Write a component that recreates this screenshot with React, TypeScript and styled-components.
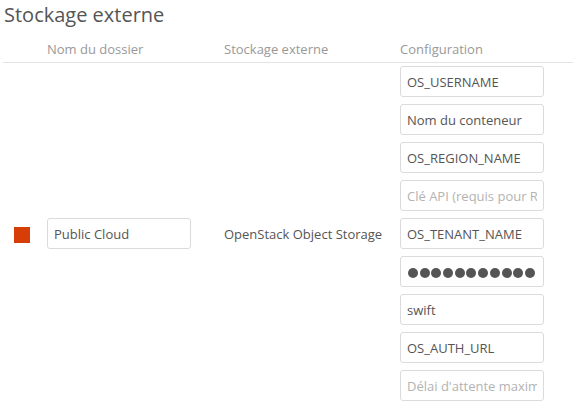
import React from "react";
import styled, { createGlobalStyle } from "styled-components";

const GlobalStyle = createGlobalStyle`
  html, body {
    margin: 0;
    padding: 0;
    background: #fff;
    overflow: hidden;
  }
  body {
    font-family: "Open Sans", "Liberation Sans", sans-serif;
    font-size: 13px;
    color: #555;
  }
`;

const Section = styled.div`
  padding-left: 3px;
`;

const Title = styled.h2`
  margin: 0;
  padding-left: 1px;
  font-size: 20px;
  font-weight: 400;
  line-height: 30px;
  color: #555;
`;

const Grid = styled.div`
  display: grid;
  grid-template-columns: 44px 177px 176px 1fr;
`;

const HeadCell = styled.div`
  padding: 11px 0 4px;
  line-height: 17px;
  color: #999;
  border-bottom: 1px solid #e3e3e3;
`;

const Cell = styled.div<{ $align?: string }>`
  display: flex;
  flex-direction: column;
  justify-content: ${(p) => p.$align || "center"};
  gap: 7px;
  padding-top: 3px;
`;

const StatusSquare = styled.span<{ $color: string }>`
  display: block;
  width: 16px;
  height: 16px;
  margin-left: 11px;
  margin-top: 2px;
  background: ${(p) => p.$color};
`;

const Field = styled.input`
  box-sizing: border-box;
  width: 144px;
  height: 31px;
  margin: 0;
  padding: 0 6px;
  border: 1px solid #dbdbdb;
  border-radius: 3px;
  background: #fff;
  font-family: "Open Sans", "Liberation Sans", sans-serif;
  font-size: 13px;
  color: #555;
  outline: none;

  &::placeholder {
    color: #b3b3b3;
  }
`;

const PasswordBox = styled.div`
  box-sizing: border-box;
  display: flex;
  align-items: center;
  gap: 1.7px;
  width: 144px;
  height: 31px;
  padding: 3px 6px 0 7px;
  border: 1px solid #dbdbdb;
  border-radius: 3px;
  background: #fff;
  overflow: hidden;
`;

const Dot = styled.span`
  flex: none;
  width: 10px;
  height: 10px;
  border-radius: 50%;
  background: #555;
`;

const BackendName = styled.span`
  color: #555;
  line-height: 17px;
  padding-top: 1px;
`;

const config: { value?: string; placeholder?: string; secret?: number }[] = [
  { value: "OS_USERNAME" },
  { value: "Nom du conteneur" },
  { value: "OS_REGION_NAME" },
  { placeholder: "Clé API (requis pour Rackspace)" },
  { value: "OS_TENANT_NAME" },
  { secret: 11 },
  { value: "swift" },
  { value: "OS_AUTH_URL" },
  { placeholder: "Délai d'attente maximum des requêtes (secondes)" },
];

export default function App() {
  return (
    <Section>
      <GlobalStyle />
      <Title>Stockage externe</Title>
      <Grid>
        <HeadCell />
        <HeadCell>Nom du dossier</HeadCell>
        <HeadCell>Stockage externe</HeadCell>
        <HeadCell>Configuration</HeadCell>

        <Cell>
          <StatusSquare $color="#d63d07" />
        </Cell>
        <Cell>
          <Field defaultValue="Public Cloud" />
        </Cell>
        <Cell>
          <BackendName>OpenStack Object Storage</BackendName>
        </Cell>
        <Cell $align="flex-start">
          {config.map((c, i) =>
            c.secret ? (
              <PasswordBox key={i}>
                {Array.from({ length: c.secret }, (_, j) => (
                  <Dot key={j} />
                ))}
              </PasswordBox>
            ) : (
              <Field key={i} defaultValue={c.value} placeholder={c.placeholder} />
            )
          )}
        </Cell>
      </Grid>
    </Section>
  );
}
